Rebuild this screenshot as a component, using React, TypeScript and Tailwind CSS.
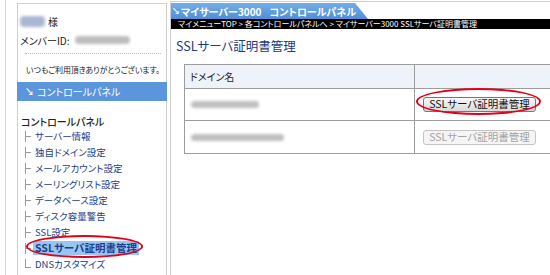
import React from "react";

const navItems = [
  "サーバー情報",
  "独自ドメイン設定",
  "メールアカウント設定",
  "メーリングリスト設定",
  "データベース設定",
  "ディスク容量警告",
  "SSL設定",
];

const TreeMark = ({ last = false }: { last?: boolean }) => (
  <span className="relative inline-block h-[11px] w-[7px] shrink-0">
    <span
      className={`absolute left-0 top-0 w-px bg-[#9a9a9a] ${last ? "h-[8px]" : "h-[11px]"}`}
    />
    <span
      className={`absolute left-0 h-px w-[6px] bg-[#9a9a9a] ${last ? "top-[8px]" : "top-[5px]"}`}
    />
  </span>
);

const Sidebar = () => (
  <div className="mt-[3px] flex w-[150px] shrink-0 flex-col border border-b-0 border-[#cfcfcf]">
    {/* member */}
    <div className="mt-[10px] flex h-[14px] items-center pl-[2px]">
      <span className="h-[11px] w-[25px] rounded-sm bg-[#a9b8d2] blur-[1.5px]" />
      <span className="ml-[3px] text-[10px]">様</span>
    </div>
    <div className="mt-[5px] flex h-[14px] items-center pl-[2px]">
      <span className="text-[10px]">メンバーID:</span>
      <span className="ml-[5px] h-[8px] w-[55px] rounded-sm bg-[#bdbdbd] blur-[1.5px]" />
    </div>
    <div className="ml-[7px] mr-[5px] mt-[6px] border-t border-dotted border-[#bdbdbd]" />
    <div className="mt-[10px] flex h-[12px] items-center whitespace-nowrap pl-[8px] text-[8px] tracking-[-0.15px]">
      いつもご利用頂きありがとうございます。
    </div>

    <div className="-mx-px mt-[6px] flex h-[19px] items-center bg-[#5b96dc] pl-[8px] text-[10px] text-white">
      <span className="text-[9px] font-bold">↘</span>
      <span className="ml-[3px]">コントロールパネル</span>
    </div>

    <div className="mt-[13px] flex h-[14px] items-center pl-[3px] text-[10px] font-medium text-[#222]">
      コントロールパネル
    </div>
    <ul className="flex flex-col text-[9.5px] text-[#1e3d8c]">
      {navItems.map((item) => (
        <li key={item} className="flex h-[16px] items-center pl-[7px]">
          <TreeMark />
          <span className="ml-[3px]">{item}</span>
        </li>
      ))}
      <li className="flex h-[16px] items-center pl-[7px]">
        <TreeMark />
        <span className="ml-px bg-[#98c6f2] px-[2px] text-[10.5px] font-bold leading-[14px]">
          SSLサーバ証明書管理
        </span>
      </li>
      <li className="flex h-[16px] items-center pl-[7px]">
        <TreeMark last />
        <span className="ml-[3px]">DNSカスタマイズ</span>
      </li>
    </ul>
  </div>
);

const CertButton = ({ disabled = false }: { disabled?: boolean }) => (
  <button
    disabled={disabled}
    className={`flex h-[15px] w-[113px] items-center justify-center rounded-[3px] border text-[10.5px] leading-none ${
      disabled
        ? "border-[#c4c4c4] bg-[#f5f5f5] text-[#a3a3a3]"
        : "border-[#767676] bg-linear-to-b from-[#fafafa] to-[#d9d9d9] text-[#111]"
    }`}
  >
    SSLサーバ証明書管理
  </button>
);

const Main = () => (
  <div className="mt-[1px] flex flex-1 flex-col border-l border-t border-[#cfcfcf]">
    <div className="mt-[1px] flex h-[16px] w-[197px] items-center whitespace-nowrap bg-linear-to-b from-[#74aee8] to-[#4f8ed8] pl-[1px] text-[10px] font-bold text-white [clip-path:polygon(0_0,calc(100%-13px)_0,100%_100%,0_100%)]">
      <span className="text-[8px]">↘</span>
      <span className="ml-[1px]">マイサーバー3000</span>
      <span className="ml-[8px]">コントロールパネル</span>
    </div>
    <div className="flex h-[10px] items-center bg-black pl-[7px] text-[8px] leading-none text-white">
      マイメニューTOP &gt; 各コントロールパネルへ &gt; マイサーバー3000 SSLサーバ証明書管理
    </div>
    <div className="mt-[9px] flex h-[16px] items-center pl-[5px] text-[12.5px] text-[#1e3a7a]">
      SSLサーバ証明書管理
    </div>

    <div className="ml-[13px] mt-[10px] grid w-[420px] grid-cols-[230px_1fr] border border-[#9c9c9c] text-[10px]">
      <div className="flex h-[24px] items-center border-b border-r border-[#9c9c9c] bg-[#eef3fa] pl-[5px]">
        ドメイン名
      </div>
      <div className="h-[24px] border-b border-[#9c9c9c] bg-[#eef3fa]" />

      <div className="flex h-[32px] items-center border-b border-r border-[#9c9c9c] pl-[6px]">
        <span className="h-[7px] w-[68px] rounded-sm bg-[#bfbfbf] blur-[1.5px]" />
      </div>
      <div className="flex h-[32px] items-center border-b border-[#9c9c9c] pl-[8px]">
        <CertButton />
      </div>

      <div className="flex h-[32px] items-center border-r border-[#9c9c9c] pl-[6px]">
        <span className="h-[7px] w-[93px] rounded-sm bg-[#bfbfbf] blur-[1.5px]" />
      </div>
      <div className="flex h-[32px] items-center pl-[8px]">
        <CertButton disabled />
      </div>
    </div>
  </div>
);

export default function App() {
  return (
    <div className="relative flex h-[275px] w-[550px] overflow-hidden bg-white font-['Noto_Sans_CJK_JP','Noto_Sans',sans-serif] text-[#222] [font-feature-settings:'palt']">
      <div className="ml-[5px] w-[12px] shrink-0 border-l border-[#d6d6d6]" />
      <Sidebar />
      <div className="w-[3px] shrink-0" />
      <Main />

      {/* red annotation rings */}
      <div className="pointer-events-none absolute left-[26px] top-[235px] h-[23px] w-[117px] rounded-[50%] border-2 border-[#e3001b]" />
      <div className="pointer-events-none absolute left-[416px] top-[88px] h-[27px] w-[125px] rounded-[50%] border-2 border-[#e3001b]" />
    </div>
  );
}
